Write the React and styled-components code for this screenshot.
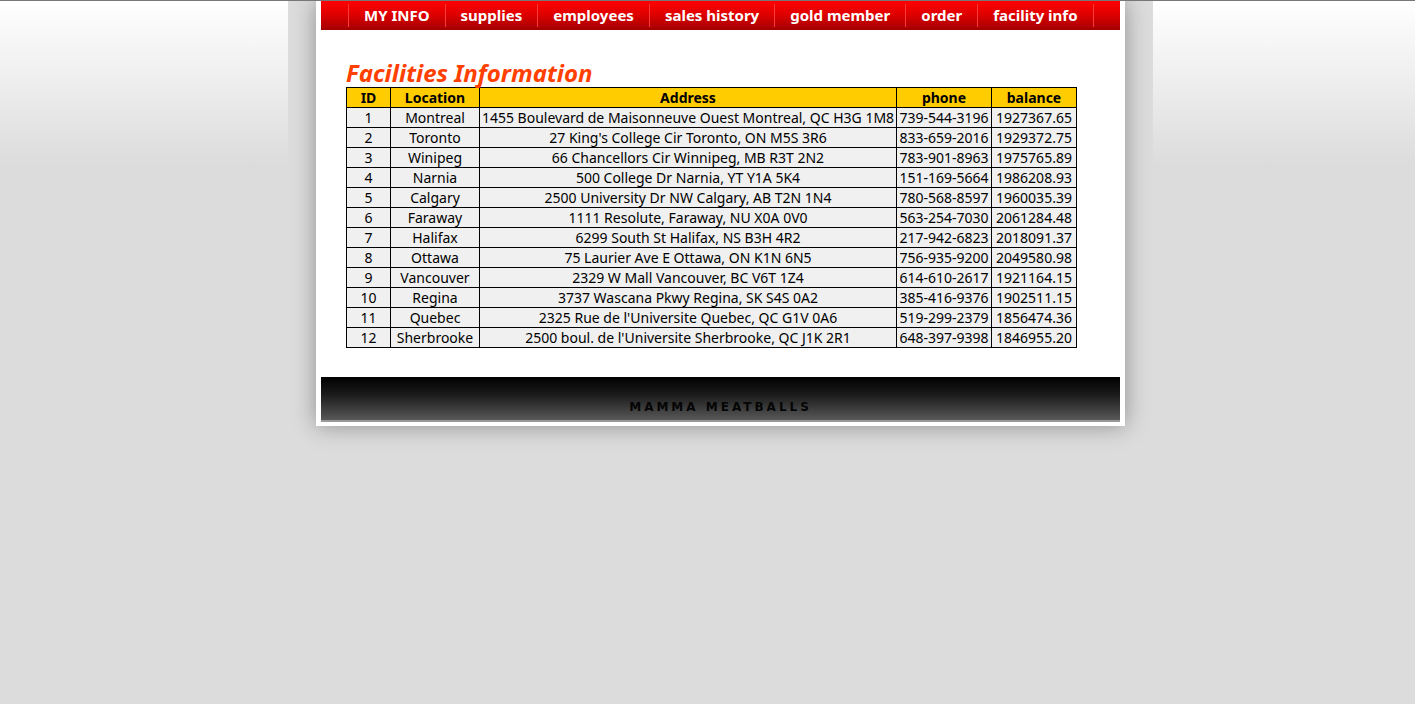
import React from "react";
import styled, { createGlobalStyle } from "styled-components";

const GlobalStyle = createGlobalStyle`
    html, body {
        margin: 0;
        padding: 0;
    }
    body {
        min-height: 704px;
        border-top: 1px solid #777;
        background: #dcdcdc linear-gradient(to bottom, #ffffff 0px, #dcdcdc 165px) no-repeat;
        font-family: "Noto Sans", "DejaVu Sans", sans-serif;
    }
`;

const Band = styled.div`
    width: 865px;
    margin: 0 auto;
    padding-left: 26px;
    box-sizing: content-box;
`;

const Backdrop = styled.div`
    background-color: #dcdcdc;
    padding: 0 28px;
`;

const Container = styled.div`
    background-color: #fff;
    padding: 0 5px 4px 5px;
    box-shadow: 0 0 22px rgba(0, 0, 0, 0.35);
`;

const Nav = styled.ul`
    display: flex;
    margin: 0;
    padding: 0 0 0 27px;
    height: 29px;
    list-style: none;
    align-items: center;
    background: linear-gradient(to bottom, #ff0000 0%, #e00000 45%, #a30000 100%);
`;

const NavItem = styled.li`
    display: flex;
    align-items: center;
    height: 23px;
    padding: 0 15px 2px 15px;
    box-sizing: border-box;
    border-left: 1px solid #ff3a3a;
    border-right: ${(p) => (p.last ? "1px solid #ff3a3a" : "none")};
    color: #fff;
    font-weight: bold;
    font-size: 15px;
    white-space: nowrap;
    cursor: pointer;
`;

const Content = styled.div`
    padding: 29px 0 29px 25px;
`;

const Title = styled.h1`
    margin: 0;
    color: #ff4000;
    font-size: 24px;
    font-style: italic;
    font-weight: bold;
    line-height: 28px;
`;

const Table = styled.table`
    border-collapse: collapse;
    table-layout: fixed;
    width: 731px;
    font-size: 14px;
    color: #000;
`;

const Th = styled.th`
    background-color: #ffcc00;
    border: 1px solid #000;
    height: 19px;
    padding: 0;
    font-weight: bold;
    line-height: 18px;
`;

const Td = styled.td`
    background-color: #f0f0f0;
    border: 1px solid #000;
    height: 19px;
    padding: 0;
    text-align: center;
    line-height: 18px;
    white-space: nowrap;
    overflow: hidden;
`;

const Footer = styled.div`
    height: 45px;
    display: flex;
    align-items: flex-end;
    justify-content: center;
    padding-bottom: 7px;
    box-sizing: border-box;
    background: linear-gradient(to bottom, #000 0%, #1a1a1a 40%, #585858 100%);
    border-bottom: 2px solid #999;
    font-family: "DejaVu Sans", sans-serif;
    font-size: 12px;
    line-height: 12px;
    font-weight: bold;
    letter-spacing: 3px;
    color: #050505;
`;

const menu = ["MY INFO", "supplies", "employees", "sales history", "gold member", "order", "facility info"];

const rows = [
    [1, "Montreal", "1455 Boulevard de Maisonneuve Ouest Montreal, QC H3G 1M8", "739-544-3196", "1927367.65"],
    [2, "Toronto", "27 King's College Cir Toronto, ON M5S 3R6", "833-659-2016", "1929372.75"],
    [3, "Winipeg", "66 Chancellors Cir Winnipeg, MB R3T 2N2", "783-901-8963", "1975765.89"],
    [4, "Narnia", "500 College Dr Narnia, YT Y1A 5K4", "151-169-5664", "1986208.93"],
    [5, "Calgary", "2500 University Dr NW Calgary, AB T2N 1N4", "780-568-8597", "1960035.39"],
    [6, "Faraway", "1111 Resolute, Faraway, NU X0A 0V0", "563-254-7030", "2061284.48"],
    [7, "Halifax", "6299 South St Halifax, NS B3H 4R2", "217-942-6823", "2018091.37"],
    [8, "Ottawa", "75 Laurier Ave E Ottawa, ON K1N 6N5", "756-935-9200", "2049580.98"],
    [9, "Vancouver", "2329 W Mall Vancouver, BC V6T 1Z4", "614-610-2617", "1921164.15"],
    [10, "Regina", "3737 Wascana Pkwy Regina, SK S4S 0A2", "385-416-9376", "1902511.15"],
    [11, "Quebec", "2325 Rue de l'Universite Quebec, QC G1V 0A6", "519-299-2379", "1856474.36"],
    [12, "Sherbrooke", "2500 boul. de l'Universite Sherbrooke, QC J1K 2R1", "648-397-9398", "1846955.20"],
];

function App() {
    return (
        <>
            <GlobalStyle />
            <Band>
                <Backdrop>
                    <Container>
                        <Nav>
                            {menu.map((item, i) => (
                                <NavItem key={item} last={i === menu.length - 1}>
                                    {item}
                                </NavItem>
                            ))}
                        </Nav>
                        <Content>
                            <Title>Facilities Information</Title>
                            <Table>
                                <colgroup>
                                    <col style={{ width: 44 }} />
                                    <col style={{ width: 89 }} />
                                    <col style={{ width: 417 }} />
                                    <col style={{ width: 95 }} />
                                    <col style={{ width: 85 }} />
                                </colgroup>
                                <thead>
                                    <tr>
                                        <Th>ID</Th>
                                        <Th>Location</Th>
                                        <Th>Address</Th>
                                        <Th>phone</Th>
                                        <Th>balance</Th>
                                    </tr>
                                </thead>
                                <tbody>
                                    {rows.map((r) => (
                                        <tr key={r[0]}>
                                            {r.map((cell, j) => (
                                                <Td key={j}>{cell}</Td>
                                            ))}
                                        </tr>
                                    ))}
                                </tbody>
                            </Table>
                        </Content>
                        <Footer>MAMMA MEATBALLS</Footer>
                    </Container>
                </Backdrop>
            </Band>
        </>
    );
}

export default App;
